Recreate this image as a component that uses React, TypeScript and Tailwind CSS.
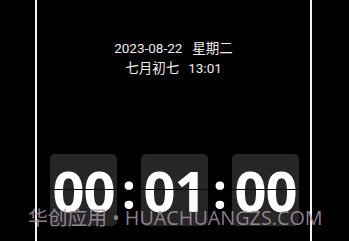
import React from "react";

const DIGITS = ["00", "01", "00"];

function FlipCard({ value }: { value: string }) {
  return (
    <div className="relative flex h-[72px] w-[67px] items-center justify-center rounded-[5px] bg-[#262626]">
      <span
        className="relative z-0 text-[56px] font-bold leading-none tracking-[-1px] text-white"
        style={{ fontFamily: '"Open Sans", sans-serif' }}
      >
        {value}
      </span>
      {/* split line of the flip card */}
      <div className="absolute left-0 right-0 top-[35px] z-10 h-px bg-[#0a0a0a]" />
    </div>
  );
}

function Colon() {
  return (
    <div
      className="flex w-[24px] justify-center text-[50px] font-bold leading-none text-white"
      style={{ fontFamily: '"Open Sans", sans-serif' }}
    >
      :
    </div>
  );
}

export default function App() {
  return (
    <div className="relative flex h-[241px] w-[349px] overflow-hidden bg-black">
      <div className="w-[35px] shrink-0" />
      <div className="w-[2px] shrink-0 bg-[#f2f2f2]" />

      {/* screen */}
      <div className="flex w-[273px] shrink-0 flex-col">
        <div
          className="mt-[38px] flex flex-col items-center text-[13.5px] leading-[20px] text-[#ececec]"
          style={{ fontFamily: 'Roboto, "Noto Sans CJK SC", sans-serif' }}
        >
          <div className="flex gap-[10px]">
            <span>2023-08-22</span>
            <span>星期二</span>
          </div>
          <div className="flex gap-[9px]">
            <span>七月初七</span>
            <span>13:01</span>
          </div>
        </div>

        <div className="mt-[76px] flex items-center pl-[13px]">
          <FlipCard value={DIGITS[0]} />
          <Colon />
          <FlipCard value={DIGITS[1]} />
          <Colon />
          <FlipCard value={DIGITS[2]} />
        </div>
      </div>

      <div className="w-[2px] shrink-0 bg-[#f2f2f2]" />
      <div className="flex-1" />

      {/* watermark */}
      <div
        className="pointer-events-none absolute left-[28px] top-[205px] whitespace-pre text-[19.8px] leading-[26px] text-[#a595a6]/85"
        style={{ fontFamily: '"Open Sans", "Noto Sans CJK SC", sans-serif' }}
      >
        华创应用 • HUACHUANGZS.COM
      </div>
    </div>
  );
}
